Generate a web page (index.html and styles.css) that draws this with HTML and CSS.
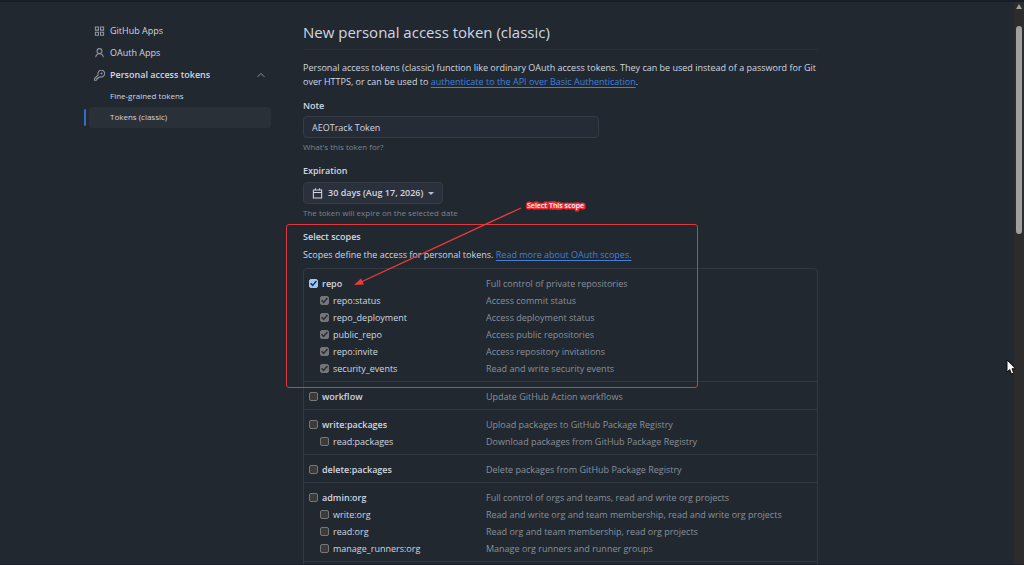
FILE: index.html
```html
<!DOCTYPE html>
<html lang="en">
<head>
    <meta charset="UTF-8">
    <title>New personal access token (classic)</title>
    <link rel="stylesheet" href="styles.css">
</head>
<body>
    <div class="page">
        <nav class="sidebar">
            <a class="nav-item" href="#">
                <svg class="icon" viewBox="0 0 16 16"><path d="M2 1.500h4.500V6H2zM9.500 1.500H14V6H9.500zM2 9h4.500v4.500H2zM9.500 9H14v4.500H9.500z"/></svg>
                GitHub Apps
            </a>
            <a class="nav-item" href="#">
                <svg class="icon" viewBox="0 0 16 16"><circle cx="8" cy="4.500" r="3.600"/><path d="M2.500 13.500c.3-3 2.400-5.200 5.500-5.200s5.200 2.200 5.500 5.200"/></svg>
                OAuth Apps
            </a>
            <a class="nav-item open" href="#">
                <svg class="icon" viewBox="0 0 16 16"><path d="M6.100 7.100a4.900 4.900 0 1 1 2.600 2.600L7.300 11H5.800v1.500H4.300V14l-1 1H.7v-2.600z"/><circle cx="11" cy="5" r=".7"/></svg>
                Personal access tokens
                <svg class="chevron" viewBox="0 0 16 16"><path d="M2.500 11 8 5.500l5.500 5.500"/></svg>
            </a>
            <a class="nav-sub" href="#">Fine-grained tokens</a>
            <a class="nav-sub current" href="#">Tokens (classic)</a>
        </nav>

        <main class="content">
            <h1>New personal access token (classic)</h1>
            <p class="intro">Personal access tokens (classic) function like ordinary OAuth access tokens. They can be used instead of a password for Git over HTTPS, or can be used to <a href="#">authenticate to the API over Basic Authentication</a>.</p>

            <form>
                <div class="field">
                    <label class="title" for="note">Note</label>
                    <input class="note" id="note" type="text" value="AEOTrack Token">
                    <p class="hint">What's this token for?</p>
                </div>

                <div class="field">
                    <label class="title" for="expiration">Expiration</label>
                    <button class="expiration" id="expiration" type="button">
                        <svg class="calendar" viewBox="0 0 16 16"><path d="M2 3h12v11.500H2zM2 6.700h12M5 .5V3M11 .5V3"/></svg>
                        30 days (Aug 17, 2026)
                        <span class="caret"></span>
                    </button>
                    <p class="hint">The token will expire on the selected date</p>
                </div>

                <section class="scopes">
                    <h2 class="title">Select scopes</h2>
                    <p class="scopes-intro">Scopes define the access for personal tokens. <a href="#">Read more about OAuth scopes.</a></p>

                    <div class="scope-list">
                        <ul class="group">
                            <li><label><input type="checkbox" checked> repo</label><span>Full control of private repositories</span></li>
                            <li class="child"><label><input type="checkbox" checked disabled> repo:status</label><span>Access commit status</span></li>
                            <li class="child"><label><input type="checkbox" checked disabled> repo_deployment</label><span>Access deployment status</span></li>
                            <li class="child"><label><input type="checkbox" checked disabled> public_repo</label><span>Access public repositories</span></li>
                            <li class="child"><label><input type="checkbox" checked disabled> repo:invite</label><span>Access repository invitations</span></li>
                            <li class="child"><label><input type="checkbox" checked disabled> security_events</label><span>Read and write security events</span></li>
                        </ul>
                        <ul class="group">
                            <li><label><input type="checkbox"> workflow</label><span>Update GitHub Action workflows</span></li>
                        </ul>
                        <ul class="group">
                            <li><label><input type="checkbox"> write:packages</label><span>Upload packages to GitHub Package Registry</span></li>
                            <li class="child"><label><input type="checkbox"> read:packages</label><span>Download packages from GitHub Package Registry</span></li>
                        </ul>
                        <ul class="group">
                            <li><label><input type="checkbox"> delete:packages</label><span>Delete packages from GitHub Package Registry</span></li>
                        </ul>
                        <ul class="group">
                            <li><label><input type="checkbox"> admin:org</label><span>Full control of orgs and teams, read and write org projects</span></li>
                            <li class="child"><label><input type="checkbox"> write:org</label><span>Read and write org and team membership, read and write org projects</span></li>
                            <li class="child"><label><input type="checkbox"> read:org</label><span>Read org and team membership, read org projects</span></li>
                            <li class="child"><label><input type="checkbox"> manage_runners:org</label><span>Manage org runners and runner groups</span></li>
                        </ul>
                    </div>

                    <div class="highlight"></div>
                    <svg class="arrow" viewBox="0 0 170 82"><path class="line" d="M168 1 8 75"/><path class="head" d="M1 78 8 71.500l3 6z"/></svg>
                    <span class="callout">Select This scope</span>
                </section>
            </form>
        </main>
    </div>

    <div class="scrollbar"><span class="up"></span><span class="thumb"></span></div>
    <svg class="cursor" viewBox="0 0 10 16"><path d="M1 1v12l2.700-2.500L5.500 15l2.200-1L6 9.700h3.500z"/></svg>
</body>
</html>
```
FILE: styles.css
```css
* {
    box-sizing: border-box;
}
body {
    display: flex;
    height: 100vh;
    margin: 0;
    overflow: hidden;
    border-top: 2px solid #171d27;
    border-bottom: 1px solid #201e2c;
    background-color: #212830;
    color: #d1d7e0;
    font-family: "Open Sans", sans-serif;
    font-size: 9px;
    line-height: 14px;
}
h1, h2, p, ul {
    margin: 0;
    padding: 0;
}
ul {
    list-style: none;
}
a {
    color: #4080dc;
    text-underline-offset: 2px;
}
.page {
    flex: 1;
    display: grid;
    grid-template-columns: 187px minmax(0, 1fr);
    column-gap: 32px;
    align-items: start;
    padding: 18px 196px 0 84px;
}

/* sidebar */
.sidebar {
    display: flex;
    flex-direction: column;
}
.nav-item, .nav-sub {
    color: #d1d7e0;
    text-decoration: none;
}
.nav-item {
    display: flex;
    align-items: center;
    gap: 5px;
    height: 22px;
    padding: 0 5px 0 10px;
}
.nav-item.open {
    font-weight: 600;
}
.icon, .chevron, .calendar {
    fill: none;
    stroke: #9198a1;
    stroke-width: 1.5;
}
.icon {
    width: 11px;
    height: 11px;
}
.chevron {
    width: 10px;
    height: 10px;
    margin-left: auto;
}
.nav-sub {
    height: 21px;
    margin-left: 5px;
    padding-left: 21px;
    border-radius: 4px;
    font-size: 8px;
    line-height: 20px;
}
.nav-sub.current {
    position: relative;
    background-color: #2a3037;
}
.nav-sub.current::before {
    content: "";
    position: absolute;
    left: -5px;
    top: 2px;
    width: 2px;
    height: 17px;
    border-radius: 1px;
    background-color: #316dca;
}

/* form */
h1 {
    padding-bottom: 5px;
    border-bottom: 1px solid #282f37;
    font-size: 15px;
    font-weight: 400;
    line-height: 24px;
}
.intro {
    margin: 11px 0 10px;
}
.title {
    display: block;
    font-size: 9px;
    font-weight: 600;
    line-height: 14px;
}
.field {
    margin-bottom: 11px;
}
.note, .expiration {
    height: 22px;
    border: 1px solid #353c46;
    border-radius: 4px;
    color: #d1d7e0;
    font: inherit;
}
.note {
    display: block;
    width: 296px;
    max-width: 100%;
    margin: 3px 0;
    padding: 0 8px;
    background-color: #262c36;
}
.expiration {
    display: flex;
    align-items: center;
    gap: 5px;
    margin: 4px 0 3px;
    padding: 0 8px;
    background-color: #2a313c;
    font-weight: 600;
}
.calendar {
    width: 11px;
    height: 11px;
    stroke: #d1d7e0;
}
.caret {
    border: 3px solid transparent;
    border-top-color: #b7bdc8;
    border-bottom: 0;
}
.hint {
    color: #7d848d;
    font-size: 8px;
    line-height: 12px;
}

/* scopes */
.scopes {
    position: relative;
}
.scopes-intro {
    margin: 4px 0 6px;
}
.scope-list {
    padding-bottom: 20px;
    border: 1px solid #323941;
    border-radius: 4px;
}
.group {
    padding: 6px 5px 4px;
    border-bottom: 1px solid #323941;
}
.group li {
    display: grid;
    grid-template-columns: 177px minmax(0, 1fr);
    align-items: center;
    height: 17px;
    color: #8a919a;
}
.group label {
    display: flex;
    align-items: center;
    gap: 4px;
    color: #d1d7e0;
    font-weight: 600;
}
.group .child label {
    padding-left: 11px;
    font-weight: 400;
}
input[type="checkbox"] {
    appearance: none;
    width: 9px;
    height: 9px;
    margin: 0;
    border: 1px solid #777777;
    border-radius: 2px;
    background-color: #3b3b3b;
}
input[type="checkbox"]:checked {
    border-color: #99c8ff;
    background-color: #99c8ff;
}
input[type="checkbox"]:checked:disabled {
    border-color: #757575;
    background-color: #757575;
}
input[type="checkbox"]:checked::before {
    content: "";
    display: block;
    width: 7px;
    height: 7px;
    background-color: #2b3038;
    clip-path: polygon(0 52%, 16% 38%, 38% 62%, 84% 8%, 100% 22%, 38% 92%);
}

/* annotation */
.highlight {
    position: absolute;
    top: -6px;
    left: -17px;
    width: 412px;
    height: 164px;
    border: 1px solid #e0383b;
    border-radius: 3px;
}
.arrow {
    position: absolute;
    top: -23px;
    left: 50px;
    width: 170px;
    height: 82px;
}
.arrow .line {
    fill: none;
    stroke: #ee3a3a;
    stroke-width: 1.3;
}
.arrow .head {
    fill: #ee3a3a;
}
.callout {
    position: absolute;
    top: -31px;
    left: 224px;
    color: #ffffff;
    font-size: 7px;
    font-weight: 600;
    paint-order: stroke;
    -webkit-text-stroke: 3px #ee2a2f;
}

/* window chrome */
.scrollbar {
    display: flex;
    flex-direction: column;
    align-items: center;
    width: 10px;
    padding-top: 2px;
    background-color: #2c2c2c;
}
.scrollbar .up {
    border: 3px solid transparent;
    border-top: 0;
    border-bottom: 5px solid #9f9f9f;
}
.scrollbar .thumb {
    width: 6px;
    height: 208px;
    margin-top: 17px;
    border-radius: 3px;
    background-color: #9f9f9f;
}
.cursor {
    position: absolute;
    top: 359px;
    left: 1006px;
    width: 10px;
    height: 16px;
    fill: #ffffff;
    stroke: #111111;
    stroke-width: 1;
}
```
